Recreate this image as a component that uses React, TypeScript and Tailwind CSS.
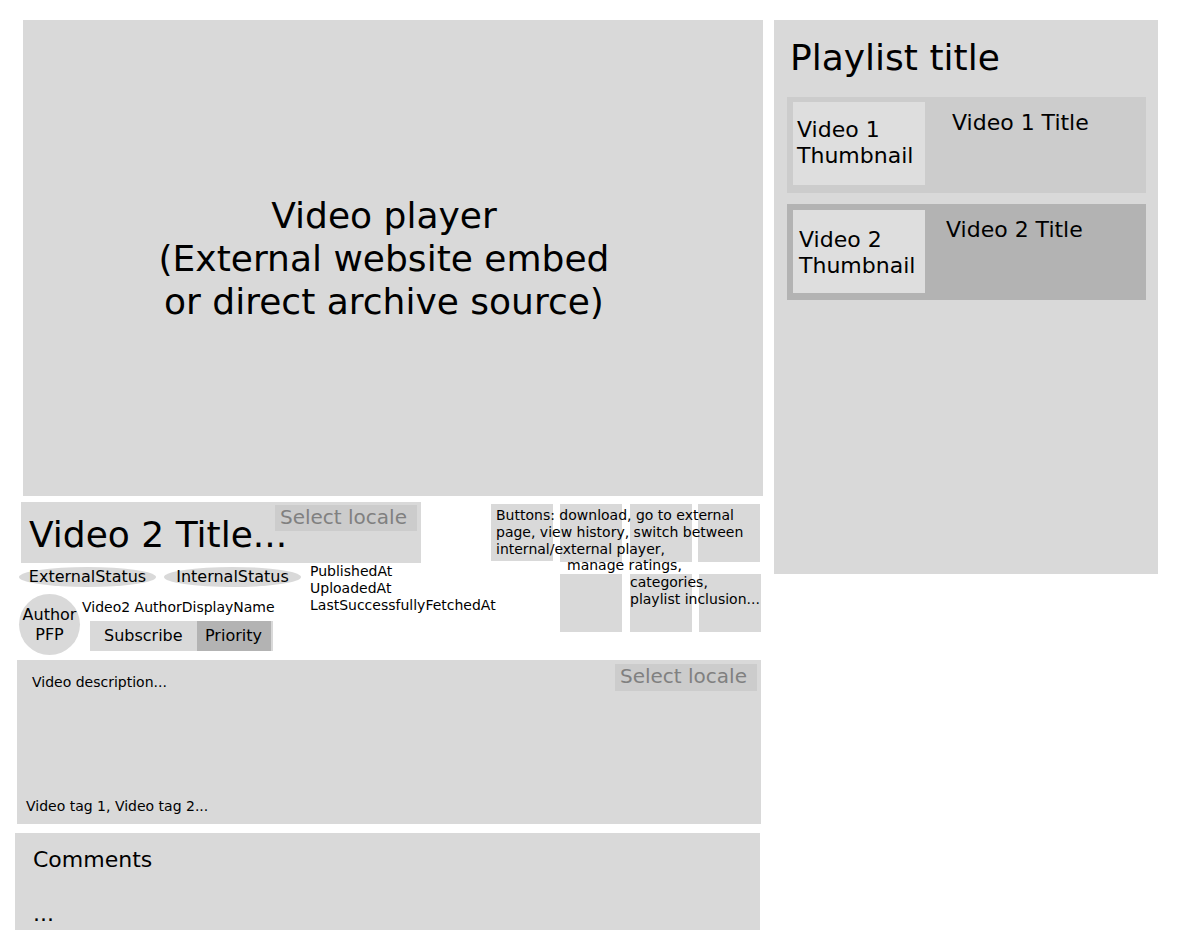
import React from "react";

const font = { fontFamily: '"DejaVu Sans", "Liberation Sans", sans-serif' };

function SelectLocale({ className }: { className: string }) {
  return (
    <div className={`absolute bg-[#cccccc] text-[20px] leading-[24px] text-[#808080] pl-[5px] ${className}`}>
      Select locale
    </div>
  );
}

export default function App() {
  return (
    <div
      className="w-[1180px] h-[930px] overflow-hidden bg-white text-black flex items-start pt-[20px]"
      style={font}
    >
      {/* Left column */}
      <div className="flex flex-col ml-[15px] w-[748px]">
        {/* Video player */}
        <div className="ml-[8px] w-[740px] h-[476px] bg-[#d9d9d9] flex items-center justify-center pr-[18px]">
          <div className="text-[36px] leading-[43px] text-center">
            Video player
            <br />
            (External website embed
            <br />
            or direct archive source)
          </div>
        </div>

        {/* Info section */}
        <div className="mt-[6px] h-[154px] flex items-start">
          <div className="w-[476px] shrink-0 flex flex-col">
            {/* Title box */}
            <div className="relative ml-[6px] w-[400px] h-[61px] bg-[#d9d9d9]">
              <SelectLocale className="left-[254px] top-[3px] w-[142px] h-[26px] pt-[0px]" />
              <div className="relative pl-[8px] pt-[15px] text-[36px] leading-[36px] whitespace-nowrap">
                Video 2 Title...
              </div>
            </div>
            <div className="flex items-start">
              <div className="ml-[4px] w-[291px] shrink-0 flex flex-col">
                <div className="mt-[4px] flex gap-[8px]">
                  <div className="w-[137px] h-[20px] rounded-[50%] bg-[#d9d9d9] flex items-center justify-center text-[16px] leading-[20px]">
                    ExternalStatus
                  </div>
                  <div className="w-[137px] h-[20px] rounded-[50%] bg-[#d9d9d9] flex items-center justify-center text-[16px] leading-[20px]">
                    InternalStatus
                  </div>
                </div>
                <div className="mt-[7px] flex items-start">
                  <div className="w-[61px] h-[61px] rounded-full bg-[#d9d9d9] flex items-center justify-center text-center text-[16px] leading-[20px]">
                    Author
                    <br />
                    PFP
                  </div>
                  <div className="ml-[2px] flex flex-col">
                    <div className="mt-[5px] text-[14px] leading-[17px] whitespace-nowrap">
                      Video2 AuthorDisplayName
                    </div>
                    <div className="mt-[5px] ml-[8px] w-[183px] h-[30px] bg-[#d9d9d9] flex items-stretch text-[16px]">
                      <div className="w-[107px] pl-[14px] flex items-center">Subscribe</div>
                      <div className="w-[74px] bg-[#b3b3b3] pl-[8px] flex items-center">Priority</div>
                    </div>
                  </div>
                </div>
              </div>
              <div className="text-[14px] leading-[17px] whitespace-nowrap">
                PublishedAt
                <br />
                UploadedAt
                <br />
                LastSuccessfullyFetchedAt
              </div>
            </div>
          </div>

          {/* Buttons */}
          <div className="relative mt-[2px] w-[270px] h-[129px] shrink-0">
            <div className="flex">
              <div className="w-[62px] h-[57px] bg-[#d9d9d9]" />
              <div className="ml-[7px] w-[62px] h-[58px] bg-[#d9d9d9]" />
              <div className="ml-[8px] w-[62px] h-[58px] bg-[#d9d9d9]" />
              <div className="ml-[6px] w-[62px] h-[58px] bg-[#d9d9d9]" />
            </div>
            <div className="flex mt-[12px] ml-[69px]">
              <div className="w-[62px] h-[58px] bg-[#d9d9d9]" />
              <div className="ml-[8px] w-[62px] h-[58px] bg-[#d9d9d9]" />
              <div className="ml-[7px] w-[62px] h-[58px] bg-[#d9d9d9]" />
            </div>
            <div className="absolute left-[5px] top-[3px] text-[14px] leading-[17px] whitespace-nowrap">
              Buttons: download, go to external
              <br />
              page, view history, switch between
              <br />
              internal/external player,
            </div>
            <div className="absolute left-[76px] top-[53px] text-[14px] leading-[17px] whitespace-nowrap">
              manage ratings,
            </div>
            <div className="absolute left-[139px] top-[70px] text-[14px] leading-[17px] whitespace-nowrap">
              categories,
              <br />
              playlist inclusion...
            </div>
          </div>
        </div>

        {/* Description */}
        <div className="relative mt-[4px] ml-[2px] w-[744px] h-[164px] bg-[#d9d9d9] flex flex-col justify-between pt-[14px] pb-[9px] text-[14px] leading-[17px]">
          <SelectLocale className="right-[4px] top-[4px] w-[142px] h-[27px] pt-[0px]" />
          <div className="pl-[15px]">Video description...</div>
          <div className="pl-[9px]">Video tag 1, Video tag 2...</div>
        </div>

        {/* Comments */}
        <div className="mt-[9px] w-[745px] h-[110px] bg-[#d9d9d9] pl-[18px] pt-[14px] text-[22px] leading-[26px]">
          <div>Comments</div>
          <div className="mt-[28px]">...</div>
        </div>
      </div>

      {/* Playlist */}
      <div className="ml-[11px] w-[384px] h-[554px] bg-[#d9d9d9] flex flex-col pt-[16px]">
        <div className="pl-[16px] text-[36px] leading-[43px]">Playlist title</div>
        <div className="mt-[18px] ml-[13px] w-[359px] h-[96px] bg-[#cccccc] flex items-start pl-[6px] pt-[5px] text-[22px] leading-[26px]">
          <div className="w-[132px] h-[83px] bg-[#dedede] pl-[4px] pt-[15px]">
            Video 1
            <br />
            Thumbnail
          </div>
          <div className="ml-[27px] mt-[8px]">Video 1 Title</div>
        </div>
        <div className="mt-[11px] ml-[13px] w-[359px] h-[96px] bg-[#b3b3b3] flex items-start pl-[6px] pt-[6px] text-[22px] leading-[26px]">
          <div className="w-[132px] h-[83px] bg-[#dedede] pl-[6px] pt-[17px]">
            Video 2
            <br />
            Thumbnail
          </div>
          <div className="ml-[21px] mt-[7px]">Video 2 Title</div>
        </div>
      </div>
    </div>
  );
}
